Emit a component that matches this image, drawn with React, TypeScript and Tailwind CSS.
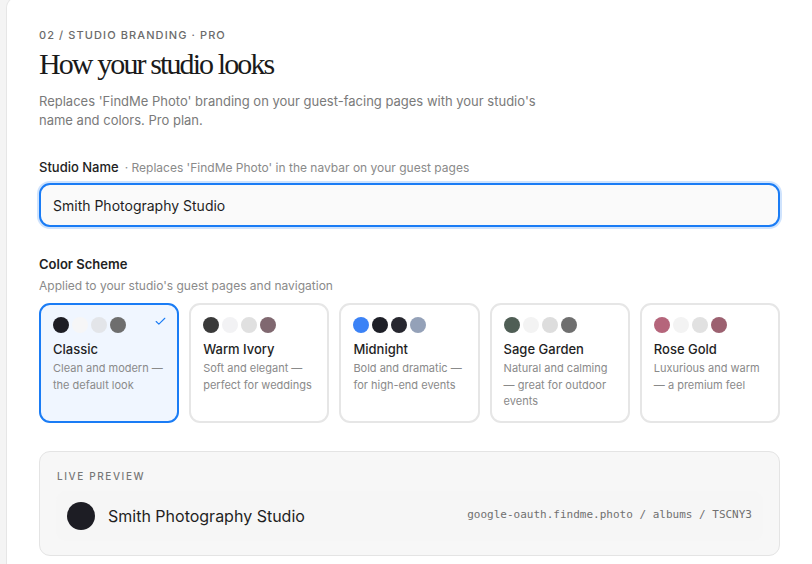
import { Check } from "lucide-react"

// Colour schemes shown as selectable cards
const schemes = [
  {
    name: "Classic",
    desc: "Clean and modern — the default look",
    colors: ["#1d1d24", "#f6f6f7", "#e3e5e9", "#6e6e6e"],
    selected: true,
  },
  {
    name: "Warm Ivory",
    desc: "Soft and elegant — perfect for weddings",
    colors: ["#3a3a3a", "#f2f2f4", "#e0e0e0", "#806870"],
  },
  {
    name: "Midnight",
    desc: "Bold and dramatic — for high-end events",
    colors: ["#3b82f6", "#1e1f27", "#27272f", "#94a1b8"],
  },
  {
    name: "Sage Garden",
    desc: "Natural and calming — great for outdoor events",
    colors: ["#4f5e55", "#f3f3f3", "#dddddd", "#6f6f6f"],
  },
  {
    name: "Rose Gold",
    desc: "Luxurious and warm — a premium feel",
    colors: ["#b5657b", "#f3f3f3", "#e1e1e1", "#9c6170"],
  },
]

export default function App() {
  return (
    <div className="flex h-[564px] w-[812px] overflow-hidden bg-[#f4f4f4] pl-[6px] font-['Inter',sans-serif]">
      <div className="mt-[-4px] flex-1 rounded-tl-[12px] border-l border-t border-[#e6e6e6] bg-white pl-[32px] pr-[32px] pt-[30px]">
        <p className="text-[11px] font-medium uppercase tracking-[0.1em] text-[#6b6b6b]">
          02 / Studio Branding · Pro
        </p>
        <h1 className="mt-[1px] font-['Liberation_Serif',serif] text-[30px] leading-[38px] tracking-[-1.9px] text-[#1a1a1a]">
          How your studio looks
        </h1>
        <p className="mt-[9px] w-[500px] text-[13px] leading-[19px] text-[#7a7a7a]">
          Replaces 'FindMe Photo' branding on your guest-facing pages with your studio's name and colors. Pro plan.
        </p>

        <div className="mt-[28px] flex items-baseline gap-[6px]">
          <span className="text-[13px] font-medium text-[#222]">Studio Name</span>
          <span className="text-[12px] text-[#8a8a8a]">· Replaces 'FindMe Photo' in the navbar on your guest pages</span>
        </div>
        <div className="mt-[6px] flex h-[44px] items-center rounded-[11px] border-2 border-[#1a7cf5] bg-[#fafafa] px-[12px] text-[14px] text-[#1f1f1f] shadow-[0_0_0_2px_#cfe3fd]">
          Smith Photography Studio
        </div>

        <p className="mt-[28px] text-[13px] font-semibold text-[#222]">Color Scheme</p>
        <p className="mt-[2px] text-[12px] text-[#8a8a8a]">Applied to your studio's guest pages and navigation</p>

        <div className="mt-[8px] grid grid-cols-5 gap-[10px]">
          {schemes.map((s) => (
            <div
              key={s.name}
              className={`relative h-[120px] rounded-[11px] border-2 px-[12px] pt-[12px] ${
                s.selected ? "border-[#1a7cf5] bg-[#f0f6ff]" : "border-[#e6e6e6] bg-white"
              }`}
            >
              <div className="flex gap-[3px]">
                {s.colors.map((c, i) => (
                  <span key={i} className="h-[16px] w-[16px] rounded-full" style={{ backgroundColor: c }} />
                ))}
              </div>
              {s.selected && (
                <Check className="absolute right-[10px] top-[10px] h-[13px] w-[13px] text-[#1a7cf5]" strokeWidth={2} />
              )}
              <p className="mt-[7px] text-[13px] font-medium text-[#1f1f1f]">{s.name}</p>
              <p className="mt-[1px] text-[11px] leading-[16.5px] text-[#8a8a8a]">{s.desc}</p>
            </div>
          ))}
        </div>

        <div className="mt-[28px] rounded-[11px] border border-[#e4e4e4] bg-[#f7f7f7] px-[16px] pb-[14px] pt-[17px]">
          <p className="pl-[1px] text-[10px] font-medium uppercase tracking-[0.16em] text-[#777]">Live Preview</p>
          <div className="mt-[7px] flex h-[50px] items-center justify-between rounded-[10px] bg-[#f6f6f6] px-[11px]">
            <div className="flex items-center gap-[13px]">
              <span className="h-[28px] w-[28px] rounded-full bg-[#1d1d24]" />
              <span className="text-[16px] text-[#1f1f1f]">Smith Photography Studio</span>
            </div>
            <span className="font-['DejaVu_Sans_Mono',monospace] text-[11px] text-[#707070]">
              google-oauth.findme.photo / albums / TSCNY3
            </span>
          </div>
        </div>
      </div>
    </div>
  )
}
